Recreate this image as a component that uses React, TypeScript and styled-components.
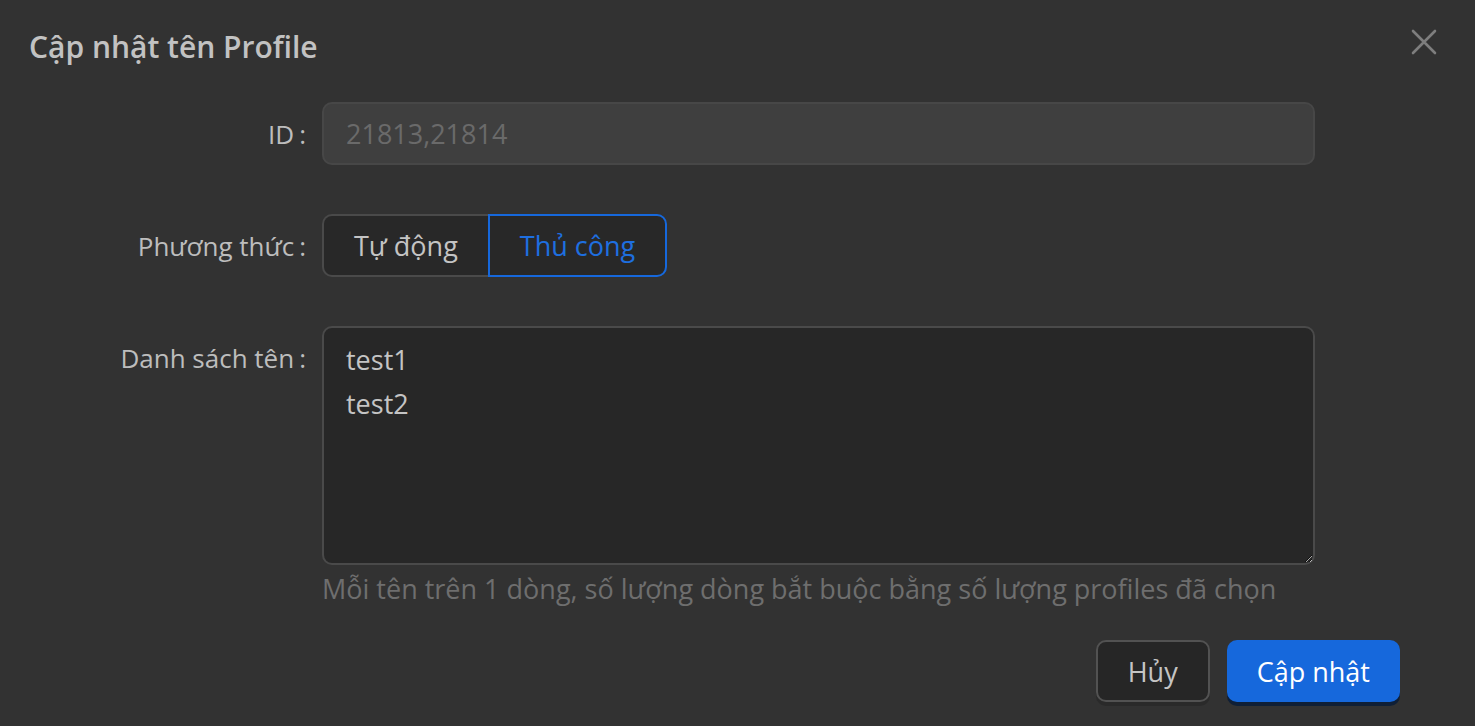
import React, { useState } from 'react';
import styled, { createGlobalStyle } from 'styled-components';

const GlobalStyle = createGlobalStyle`
    html, body {
        margin:0;
        padding:0;
        background:#323232;
    }
    body {
        font-family:"Open Sans", "Noto Sans", "DejaVu Sans", sans-serif;
        color:#c4c4c4;
    }
`

const ModalBlock = styled.div`
    width:1475px;
    height:726px;
    box-sizing:border-box;
    background:#323232;
    display:flex;
    flex-direction:column;
`

const HeaderBlock = styled.header`
    display:flex;
    align-items:center;
    justify-content:space-between;
    padding:24px 36px 0 29px;
    height:46px;
    .title {
        font-size:30px;
        font-weight:600;
        color:#c2c2c2;
        line-height:46px;
    }
`

const CloseButton = styled.button`
    width:30px;
    height:30px;
    padding:0;
    border:none;
    background:transparent;
    display:flex;
    align-items:center;
    justify-content:center;
    cursor:pointer;
    margin-top:-10px;
`

const FormBlock = styled.div`
    display:grid;
    grid-template-columns:322px 993px;
    margin-top:32px;
`

const Label = styled.div`
    height:63px;
    display:flex;
    align-items:center;
    justify-content:flex-end;
    padding-right:16px;
    font-size:26px;
    color:#bdbdbd;
    .colon {
        margin-left:5px;
    }
`

const Control = styled.div<{ $gap?: number }>`
    margin-bottom:${({ $gap }) => $gap ?? 49}px;
`

const TextInput = styled.input`
    box-sizing:border-box;
    width:100%;
    height:63px;
    padding:0 22px;
    border:2px solid #474747;
    border-radius:10px;
    background:#3f3f3f;
    color:#6a6a6a;
    font-family:inherit;
    font-size:27px;
    outline:none;
`

const Segmented = styled.div`
    display:inline-flex;
    height:63px;
`

const SegmentButton = styled.button<{ $active?: boolean }>`
    box-sizing:border-box;
    height:63px;
    padding:0 30px;
    background:#282828;
    font-family:inherit;
    font-size:27px;
    color:${({ $active }) => ($active ? '#1e6fe0' : '#c4c4c4')};
    border:2px solid ${({ $active }) => ($active ? '#1668dc' : '#4a4a4a')};
    cursor:pointer;
    &:first-child {
        border-radius:10px 0 0 10px;
        border-right:none;
    }
    &:last-child {
        border-radius:0 10px 10px 0;
    }
`

const TextArea = styled.textarea`
    box-sizing:border-box;
    display:block;
    width:100%;
    height:239px;
    padding:10px 22px;
    border:2px solid #4a4a4a;
    border-radius:10px;
    background:#272727;
    color:#c4c4c4;
    font-family:inherit;
    font-size:27px;
    line-height:44px;
    resize:vertical;
    outline:none;
    color-scheme:dark;
`

const HelpText = styled.div`
    font-size:27px;
    line-height:48px;
    color:#6e6e6e;
    white-space:nowrap;
`

const FooterBlock = styled.footer`
    display:flex;
    justify-content:flex-end;
    gap:17px;
    padding-right:75px;
    margin-top:27px;
`

const Button = styled.button<{ $primary?: boolean }>`
    box-sizing:border-box;
    height:62px;
    padding:0 30px;
    border-radius:10px;
    font-family:inherit;
    font-size:27px;
    cursor:pointer;
    color:${({ $primary }) => ($primary ? '#ffffff' : '#c4c4c4')};
    background:${({ $primary }) => ($primary ? '#1668dc' : '#262626')};
    border:${({ $primary }) => ($primary ? 'none' : '2px solid #525252')};
    box-shadow:${({ $primary }) => ($primary ? '0 4px 0 #0f1f36' : '0 4px 0 #2a2a2a')};
`

const App = () => {
    const [mode, setMode] = useState<'auto' | 'manual'>('manual');
    const [names, setNames] = useState('test1\ntest2');

    return (
        <ModalBlock>
            <GlobalStyle />
            <HeaderBlock>
                <span className="title">Cập nhật tên Profile</span>
                <CloseButton aria-label="close">
                    <svg width="26" height="26" viewBox="0 0 26 26">
                        <path d="M2 2 L24 24 M24 2 L2 24" stroke="#7e7e7e" strokeWidth="2.6" strokeLinecap="round" />
                    </svg>
                </CloseButton>
            </HeaderBlock>
            <FormBlock>
                <Label>ID<span className="colon">:</span></Label>
                <Control>
                    <TextInput value="21813,21814" disabled readOnly />
                </Control>

                <Label>Phương thức<span className="colon">:</span></Label>
                <Control>
                    <Segmented>
                        <SegmentButton $active={mode === 'auto'} onClick={() => setMode('auto')}>Tự động</SegmentButton>
                        <SegmentButton $active={mode === 'manual'} onClick={() => setMode('manual')}>Thủ công</SegmentButton>
                    </Segmented>
                </Control>

                <Label>Danh sách tên<span className="colon">:</span></Label>
                <Control $gap={0}>
                    <TextArea value={names} onChange={e => setNames(e.target.value)} />
                    <HelpText>Mỗi tên trên 1 dòng, số lượng dòng bắt buộc bằng số lượng profiles đã chọn</HelpText>
                </Control>
            </FormBlock>
            <FooterBlock>
                <Button>Hủy</Button>
                <Button $primary>Cập nhật</Button>
            </FooterBlock>
        </ModalBlock>
    )
}

export default App;
